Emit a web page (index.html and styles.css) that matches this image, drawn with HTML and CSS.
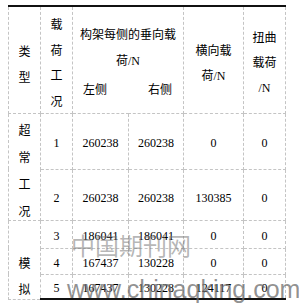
FILE: index.html
```html
<!DOCTYPE html>
<html lang="zh-CN">
<head>
  <meta charset="UTF-8">
  <meta name="viewport" content="width=device-width, initial-scale=1.0">
  <title>载荷工况</title>
  <link rel="stylesheet" href="styles.css">
</head>
<body>

<div class="page">
  <table class="loads">
    <colgroup>
      <col class="c-type">
      <col class="c-case">
      <col class="c-left">
      <col class="c-right">
      <col class="c-lat">
      <col class="c-tor">
    </colgroup>
    <thead>
      <tr class="r-head">
        <th><div class="stack type-head">类<br>型</div></th>
        <th><div class="stack case-head">载<br>荷<br>工<br>况</div></th>
        <th colspan="2">
          <div class="stack vert-head">构架每侧的垂向载<br>荷<span class="unit">/N</span></div>
          <div class="sides"><span>左侧</span><span>右侧</span></div>
        </th>
        <th><div class="stack lat-head">横向载<br>荷<span class="unit">/N</span></div></th>
        <th><div class="stack tor-head">扭曲<br>载荷<br><span class="unit">/N</span></div></th>
      </tr>
    </thead>
    <tbody>
      <tr class="r1">
        <td rowspan="2" class="group"><div class="stack over">超<br>常<br>工<br>况</div></td>
        <td>1</td>
        <td>260238</td>
        <td>260238</td>
        <td>0</td>
        <td>0</td>
      </tr>
      <tr class="r2">
        <td>2</td>
        <td>260238</td>
        <td>260238</td>
        <td>130385</td>
        <td>0</td>
      </tr>
      <tr class="r3">
        <td rowspan="3" class="group"><div class="stack sim">模<br>拟</div></td>
        <td>3</td>
        <td>186041</td>
        <td>186041</td>
        <td>0</td>
        <td>0</td>
      </tr>
      <tr class="r4">
        <td>4</td>
        <td>167437</td>
        <td>130228</td>
        <td>0</td>
        <td>0</td>
      </tr>
      <tr class="r5">
        <td>5</td>
        <td>167437</td>
        <td>130228</td>
        <td>124117</td>
        <td>0</td>
      </tr>
    </tbody>
  </table>

  <!-- source watermark laid over the table -->
  <div class="mark-cn">中国期刊网</div>
  <div class="mark-url">www.chinaqking.com</div>
</div>

</body>
</html>
```

FILE: styles.css
```css
body { margin: 0; padding: 0; background: #fff; color: #000; }
.page { position: relative; width: 299px; height: 304px; overflow: hidden; }

.loads { border-collapse: collapse; table-layout: fixed; width: 277px; margin: 5px 0 0 8px; font-family: "Liberation Serif", "Noto Sans CJK SC", serif; font-size: 12px; }
.c-type { width: 32px; }
.c-case { width: 32px; }
.c-left { width: 56px; }
.c-right { width: 55px; }
.c-lat { width: 60px; }
.c-tor { width: 42px; }

.loads th, .loads td { border: 1px dashed #c4c4c4; padding: 0; text-align: center; font-weight: normal; }
.loads th { border-top: 2px solid #111; vertical-align: top; font-family: "Noto Sans CJK SC", sans-serif; }
.loads tbody tr:last-child td { border-bottom: 2px solid #111; }
.loads td { vertical-align: middle; padding-top: 4px; line-height: 16px; }
.loads .r2 td { padding-top: 7px; }

.r-head { height: 107px; }
.r1 { height: 56px; }
.r2 { height: 51px; }
.r3 { height: 28px; }
.r4 { height: 26px; }
.r5 { height: 25px; }

.stack { line-height: 26px; }
.unit { font-family: "Liberation Serif", serif; }

.type-head { padding-top: 31px; }
.case-head { line-height: 25.7px; padding-top: 4px; margin-bottom: -6px; }
.vert-head { padding-top: 14px; }
.sides { display: flex; justify-content: space-between; padding: 2px 11px 0 10px; line-height: 26px; }
.lat-head { line-height: 25px; padding-top: 30px; }
.tor-head { line-height: 25px; padding-top: 17px; }

.loads td.group { vertical-align: top; padding-top: 0; font-family: "Noto Sans CJK SC", sans-serif; }
.over { line-height: 27px; padding-top: 2px; margin-bottom: -6px; }
.sim { padding-top: 29px; margin-bottom: -6px; }

.mark-cn { position: absolute; left: 71px; top: 229px; font-family: "Noto Sans CJK SC", serif; font-size: 24px; line-height: 32px; color: rgba(120, 120, 120, 0.55); letter-spacing: 0; }
.mark-url { position: absolute; left: 67px; top: 274px; font-family: "Liberation Sans", Arial, sans-serif; font-size: 25px; line-height: 30px; color: rgba(110, 110, 110, 0.75); }
```
